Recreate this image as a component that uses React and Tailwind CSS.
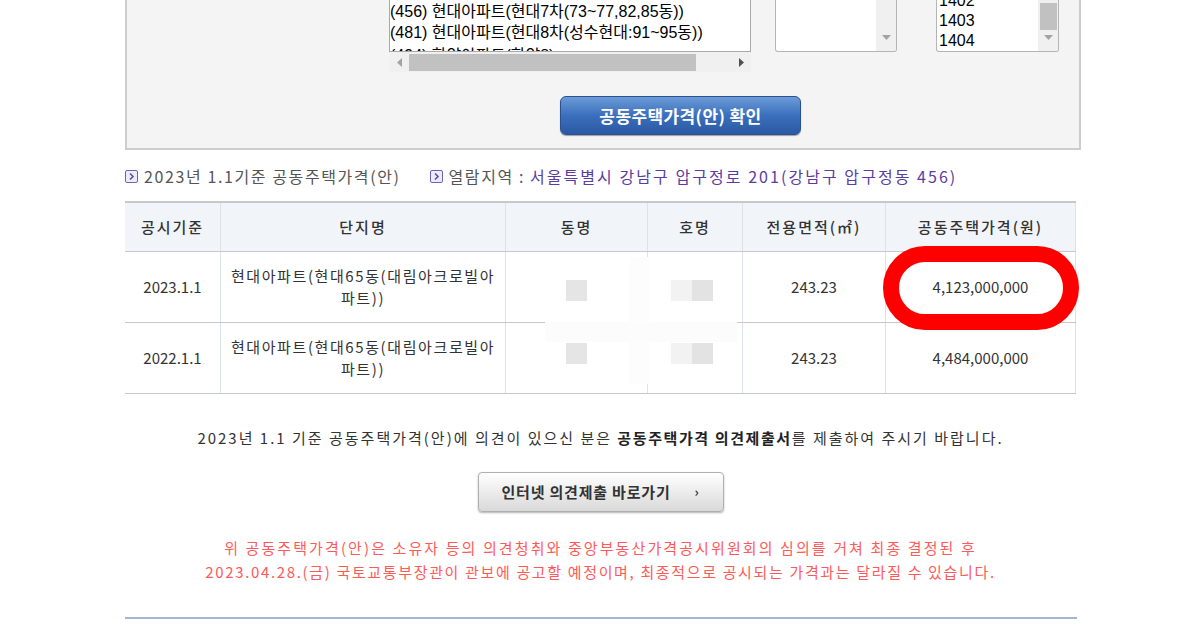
function Bullet() {
  return (
    <svg width="13" height="13" viewBox="0 0 13 13" className="shrink-0">
      <rect x="0.5" y="0.5" width="12" height="12" rx="1.5" fill="#ecebf7" stroke="#6d63b8" />
      <path d="M5 3.5 L8 6.5 L5 9.5" fill="none" stroke="#5a4fa8" strokeWidth="1.6" />
    </svg>
  );
}

function DownArrow({ color = '#a3a3a3' }) {
  return (
    <svg width="9" height="5" viewBox="0 0 9 5">
      <path d="M0 0 L9 0 L4.5 5 Z" fill={color} />
    </svg>
  );
}

const cols = 'grid grid-cols-[95px_285px_142px_95px_143px_191px]';

const rows = [
  { year: '2023.1.1', area: '243.23', price: '4,123,000,000' },
  { year: '2022.1.1', area: '243.23', price: '4,484,000,000' },
];

export default function App() {
  return (
    <div className="w-[1180px] h-[637px] bg-white overflow-hidden font-['Noto_Sans_CJK_KR',sans-serif] text-[#333]">
      {/* search panel (cut off at top) */}
      <div className="ml-[125px] w-[956px] bg-[#f4f4f4] border-x-2 border-b-2 border-[#cdcdcd] pb-[13px]">
        <div className="flex items-start pl-[262px] h-[72px]">
          {/* apartment list */}
          <div className="w-[362px] flex flex-col">
            <div className="h-[52px] pt-[1px] bg-white border-x border-b border-[#a9a9a9] overflow-hidden font-['Liberation_Sans','Noto_Sans_CJK_KR',sans-serif] text-[16px] leading-[21px] text-black whitespace-nowrap">
              <div>(456) 현대아파트(현대7차(73~77,82,85동))</div>
              <div>(481) 현대아파트(현대8차(성수현대:91~95동))</div>
              <div className="pt-[2px]">(494) 한양아파트(한양8)</div>
            </div>
            <div className="h-[20px] bg-[#f0f0f0] flex items-center">
              <div className="w-[20px] flex justify-center">
                <svg width="5" height="9" viewBox="0 0 5 9"><path d="M5 0 L5 9 L0 4.5 Z" fill="#a3a3a3" /></svg>
              </div>
              <div className="w-[287px] h-[17px] bg-[#c1c1c1]" />
              <div className="flex-1 flex justify-end pr-[7px]">
                <svg width="5" height="9" viewBox="0 0 5 9"><path d="M0 0 L0 9 L5 4.5 Z" fill="#505050" /></svg>
              </div>
            </div>
          </div>

          {/* dong list */}
          <div className="ml-[24px] w-[122px] h-[52px] bg-white border-x border-b border-[#b4b4b4] rounded-b-[3px] flex overflow-hidden">
            <div className="flex-1" />
            <div className="w-[20px] bg-[#f0f0f0] flex flex-col justify-end items-center pb-[11px]">
              <DownArrow />
            </div>
          </div>

          {/* ho list */}
          <div className="ml-[39px] w-[123px] h-[52px] bg-white border-x border-b border-[#b4b4b4] rounded-b-[3px] flex overflow-hidden">
            <div className="flex-1 flex flex-col justify-end pl-[2px] font-['Liberation_Sans',sans-serif] text-[16px] leading-[20px] text-black">
              <div>1402</div>
              <div>1403</div>
              <div>1404</div>
            </div>
            <div className="w-[20px] bg-[#f0f0f0] flex flex-col items-center justify-between pt-[3px] pb-[11px]">
              <div className="w-[17px] h-[27px] bg-[#c1c1c1]" />
              <DownArrow />
            </div>
          </div>
        </div>

        <button className="ml-[433px] mt-[24px] w-[241px] h-[39px] rounded-[6px] border border-[#2a508f] bg-linear-to-b from-[#6b9bd8] via-[#3b6fbc] to-[#2b59a2] shadow-[0_1px_1px_rgba(0,0,0,0.35)] text-white text-[17px] font-bold tracking-[0.4px] flex items-center justify-center">
          공동주택가격(안) 확인
        </button>
      </div>

      {/* info line */}
      <div className="ml-[125px] mt-[16px] h-[20px] flex items-center text-[16px] text-[#555] whitespace-nowrap">
        <Bullet />
        <span className="ml-[6px] tracking-[1.6px]">2023년 1.1기준 공동주택가격(안)</span>
        <span className="ml-[29px]"><Bullet /></span>
        <span className="ml-[6px] tracking-[1.6px]">열람지역 : </span>
        <span className="ml-[5px] text-[#5b3c9f] tracking-[2.05px]">서울특별시 강남구 압구정로 201(강남구 압구정동 456)</span>
      </div>

      {/* price table */}
      <div className="ml-[125px] mt-[15px] w-[951px] relative">
        <div className={`${cols} border-t-2 border-[#4a79d1] bg-[#f1f4f9] h-[51px] border-b border-[#c8c8c8] text-[15px] text-[#333] font-medium`}>
          {['공시기준', '단지명', '동명', '호명', '전용면적(㎡)', '공동주택가격(원)'].map((h, i) => (
            <div key={h} className={`flex items-center justify-center tracking-[2px] ${i > 0 ? 'border-l border-[#dde2e8]' : ''} ${i === 5 ? 'border-r border-[#dde2e8]' : ''}`}>
              {h}
            </div>
          ))}
        </div>
        {rows.map((r) => (
          <div key={r.year} className={`${cols} h-[71px] border-b border-[#c8c8c8] text-[15px] text-[#333]`}>
            <div className="flex items-center justify-center">{r.year}</div>
            <div className="flex items-center justify-center text-center leading-[22px] tracking-[1.6px] border-l border-[#dde2e8]">
              현대아파트(현대65동(대림아크로빌아<br />파트))
            </div>
            <div className="border-l border-[#dde2e8]" />
            <div className="border-l border-[#dde2e8]" />
            <div className="flex items-center justify-center border-l border-[#dde2e8]">{r.area}</div>
            <div className="flex items-center justify-center border-x border-[#dde2e8]">{r.price}</div>
          </div>
        ))}

        {/* masked cells */}
        <div className="absolute left-[504px] top-[56px] w-[21px] h-[127px] bg-[#fdfdfd]" />
        <div className="absolute left-[420px] top-[121px] w-[192px] h-[20px] bg-[#fcfcfc]" />
        <div className="absolute left-[441px] top-[79px] w-[21px] h-[21px] bg-[#e5e5e5]" />
        <div className="absolute left-[441px] top-[142px] w-[21px] h-[21px] bg-[#e5e5e5]" />
        <div className="absolute left-[546px] top-[79px] w-[21px] h-[21px] bg-[#f2f2f2]" />
        <div className="absolute left-[567px] top-[79px] w-[21px] h-[21px] bg-[#e3e3e3]" />
        <div className="absolute left-[546px] top-[142px] w-[21px] h-[21px] bg-[#f2f2f2]" />
        <div className="absolute left-[567px] top-[142px] w-[21px] h-[21px] bg-[#e3e3e3]" />

        {/* highlight annotation */}
        <div className="absolute left-[758px] top-[45px] w-[196px] h-[84px] rounded-full border-[16px] border-[#ff0000]" />
      </div>

      {/* notice */}
      <div className="ml-[125px] w-[951px] flex flex-col items-center">
        <p className="mt-[35px] text-[15px] leading-[18px] tracking-[2px] text-[#333] whitespace-nowrap">
          2023년 1.1 기준 공동주택가격(안)에 의견이 있으신 분은 <b className="text-[#222] tracking-[1.6px]">공동주택가격 의견제출서</b>를 제출하여 주시기 바랍니다.
        </p>
        <button className="mt-[25px] w-[246px] h-[40px] rounded-[4px] border border-[#b0b0b0] bg-linear-to-b from-white to-[#d9d9d9] shadow-[0_1px_2px_rgba(0,0,0,0.3)] flex items-center pl-[23px] text-[15px] font-bold tracking-[0.8px] text-[#333]">
          <span>인터넷 의견제출 바로가기</span>
          <span className="ml-[24px] text-[13px]">›</span>
        </button>
        <div className="mt-[24px] text-center text-[15px] leading-[24px] text-[#ff5a5a] whitespace-nowrap">
          <p className="tracking-[2.1px]">위 공동주택가격(안)은 소유자 등의 의견청취와 중앙부동산가격공시위원회의 심의를 거쳐 최종 결정된 후</p>
          <p className="tracking-[1.65px]">2023.04.28.(금) 국토교통부장관이 관보에 공고할 예정이며, 최종적으로 공시되는 가격과는 달라질 수 있습니다.</p>
        </div>
        <div className="mt-[33px] w-[952px] h-[2px] bg-[#a3b5d8]" />
      </div>
    </div>
  );
}
